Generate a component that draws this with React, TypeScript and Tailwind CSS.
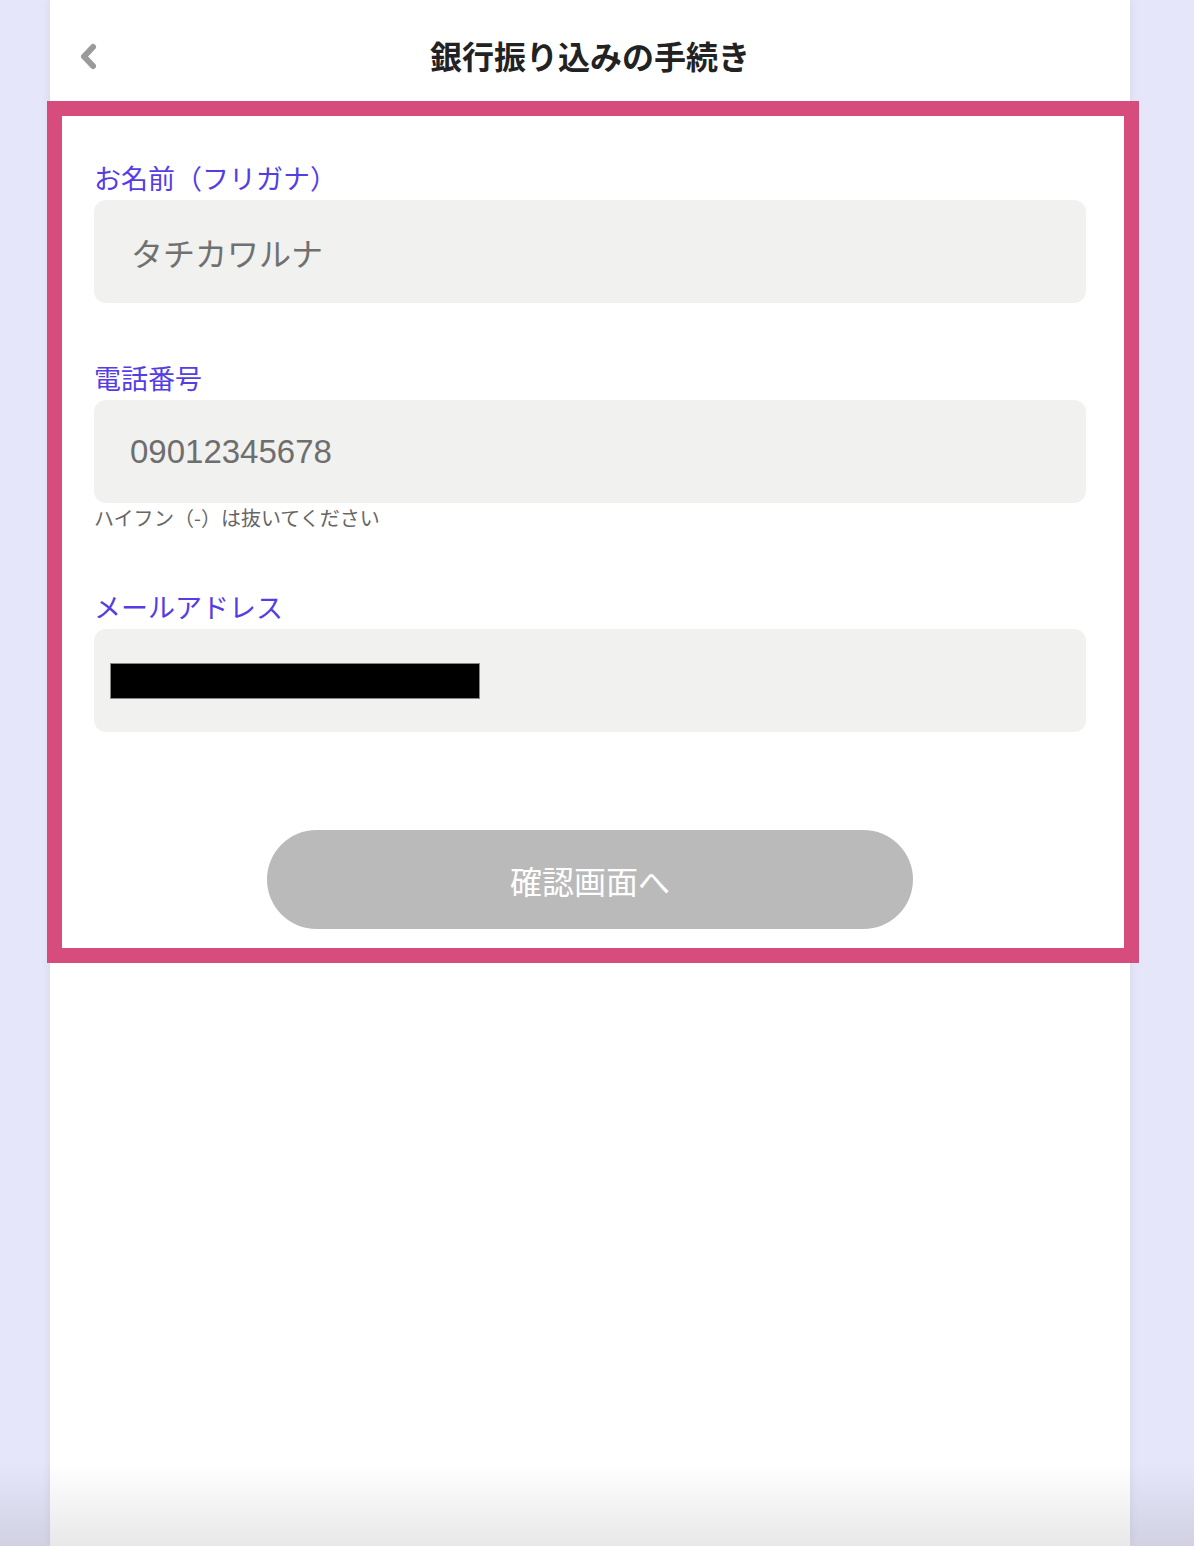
import { ReactNode } from "react";

const jp = "font-['Noto_Sans_CJK_JP','Noto_Sans',sans-serif]";

function Field({ label, children, hint }: { label: string; children: ReactNode; hint?: string }) {
    return (
        <div className="flex flex-col">
            <label className="text-[27px] leading-[36px] text-[#553de4] mb-[4px]">{label}</label>
            <div className="h-[103px] rounded-[12px] bg-[#f1f1ef] flex items-center">
                {children}
            </div>
            {hint && <p className="mt-[1px] text-[20px] leading-[28px] text-[#666666]">{hint}</p>}
        </div>
    );
}

export default function App() {
    return (
        <div className={`relative min-h-screen h-[1546px] bg-[#e6e6fa] flex overflow-hidden ${jp}`}>
            {/* Phone column */}
            <div className="relative ml-[50px] w-[1080px] bg-white shadow-[0_0_10px_rgba(0,0,0,0.07)] flex flex-col">
                {/* Header */}
                <header className="relative h-[100px] flex items-center justify-center">
                    <button className="absolute left-[26px] top-[42px] w-[24px] h-[30px] flex items-center justify-center">
                        <svg width="22" height="30" viewBox="0 0 22 30" fill="none">
                            <path d="M16 5L7 14.5L16 24" stroke="#9a9a9a" strokeWidth="6" strokeLinecap="round" strokeLinejoin="round" />
                        </svg>
                    </button>
                    <h1 className="mt-[10px] text-[32px] font-bold text-[#222222]">銀行振り込みの手続き</h1>
                </header>

                {/* Form */}
                <div className="px-[44px] pt-[60px] flex flex-col gap-[57px]">
                    <Field label="お名前（フリガナ）">
                        <span className="pl-[37px] text-[32px] text-[#707070]">タチカワルナ</span>
                    </Field>
                    <Field label="電話番号" hint="ハイフン（-）は抜いてください">
                        <span className="pl-[36px] text-[33px] text-[#6e6e6e] font-['Liberation_Sans','Noto_Sans_CJK_JP',sans-serif]">09012345678</span>
                    </Field>
                    <Field label="メールアドレス">
                        <div className="ml-[16px] w-[370px] h-[36px] bg-black border border-[#888888]" />
                    </Field>
                </div>

                <div className="flex justify-center mt-[98px]">
                    <button className="w-[646px] h-[99px] rounded-full bg-[#bababa] text-white text-[32px]">
                        確認画面へ
                    </button>
                </div>

                {/* Highlight annotation */}
                <div className="pointer-events-none absolute left-[-3px] top-[101px] w-[1092px] h-[862px] border-[15px] border-[#d64c7c]" />
            </div>

            {/* Bottom fade */}
            <div className="pointer-events-none absolute inset-x-0 bottom-0 h-[84px] bg-gradient-to-b from-transparent to-[rgba(0,0,0,0.09)]" />
        </div>
    );
}
